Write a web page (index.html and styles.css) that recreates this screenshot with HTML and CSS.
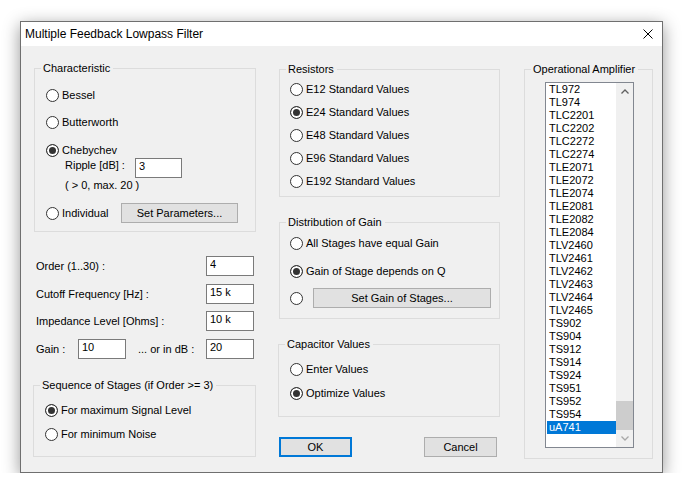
FILE: index.html
```html
<!DOCTYPE html>
<html lang="en">
<head>
<meta charset="utf-8">
<title>Multiple Feedback Lowpass Filter</title>
<link rel="stylesheet" href="styles.css">
</head>
<body>
<div class="desktop">
  <div class="window">
    <div class="titlebar">
      <span class="title">Multiple Feedback Lowpass Filter</span>
      <svg class="close" width="10" height="10" viewBox="0 0 10 10"><path d="M0.5 0.5 L9.5 9.5 M9.5 0.5 L0.5 9.5" stroke="#000" stroke-width="1" fill="none"/></svg>
    </div>
    <div class="client">
      <div class="col col-left">
        <fieldset class="gb gb-char">
          <legend>Characteristic</legend>
          <div class="gb-body">
            <label class="radio-row r-bessel"><input type="radio" name="ch"><span>Bessel</span></label>
            <label class="radio-row r-butter"><input type="radio" name="ch"><span>Butterworth</span></label>
            <label class="radio-row r-cheby"><input type="radio" name="ch" checked><span>Chebychev</span></label>
            <div class="ripple-row"><span class="ripple-label">Ripple [dB] :</span><input class="edit edit-ripple" type="text" value="3"></div>
            <div class="note">( &gt; 0, max. 20 )</div>
            <div class="indiv-row">
              <label class="radio-row indiv"><input type="radio" name="ch"><span>Individual</span></label>
              <button class="btn btn-params">Set Parameters...</button>
            </div>
          </div>
        </fieldset>

        <div class="field-row f-order"><span>Order (1..30) :</span><input class="edit" type="text" value="4"></div>
        <div class="field-row f-cutoff"><span>Cutoff Frequency [Hz] :</span><input class="edit" type="text" value="15 k"></div>
        <div class="field-row f-imp"><span>Impedance Level [Ohms] :</span><input class="edit" type="text" value="10 k"></div>
        <div class="field-row f-gain"><span class="gain-label">Gain :</span><input class="edit" type="text" value="10"><span class="db-label">... or in dB :</span><input class="edit edit-db" type="text" value="20"></div>

        <fieldset class="gb gb-seq">
          <legend>Sequence of Stages (if Order &gt;= 3)</legend>
          <div class="gb-body">
            <label class="radio-row s1"><input type="radio" name="seq" checked><span>For maximum Signal Level</span></label>
            <label class="radio-row s2"><input type="radio" name="seq"><span>For minimum Noise</span></label>
          </div>
        </fieldset>
      </div>

      <div class="col col-mid">
        <fieldset class="gb gb-res">
          <legend>Resistors</legend>
          <div class="gb-body">
            <label class="radio-row"><input type="radio" name="res"><span>E12 Standard Values</span></label>
            <label class="radio-row"><input type="radio" name="res" checked><span>E24 Standard Values</span></label>
            <label class="radio-row"><input type="radio" name="res"><span>E48 Standard Values</span></label>
            <label class="radio-row"><input type="radio" name="res"><span>E96 Standard Values</span></label>
            <label class="radio-row"><input type="radio" name="res"><span>E192 Standard Values</span></label>
          </div>
        </fieldset>

        <fieldset class="gb gb-dist">
          <legend>Distribution of Gain</legend>
          <div class="gb-body">
            <label class="radio-row d1"><input type="radio" name="dist"><span>All Stages have equal Gain</span></label>
            <label class="radio-row d2"><input type="radio" name="dist" checked><span>Gain of Stage depends on Q</span></label>
            <div class="radio-row d3"><input type="radio" name="dist"><button class="btn btn-stages">Set Gain of Stages...</button></div>
          </div>
        </fieldset>

        <fieldset class="gb gb-cap">
          <legend>Capacitor Values</legend>
          <div class="gb-body">
            <label class="radio-row c1"><input type="radio" name="cap"><span>Enter Values</span></label>
            <label class="radio-row c2"><input type="radio" name="cap" checked><span>Optimize Values</span></label>
          </div>
        </fieldset>

        <div class="buttons">
          <button class="btn btn-ok">OK</button>
          <button class="btn btn-cancel">Cancel</button>
        </div>
      </div>

      <div class="col col-right">
        <fieldset class="gb gb-op">
          <legend>Operational Amplifier</legend>
          <div class="gb-body">
            <div class="listbox">
              <ul class="items">
                <li>TL972</li><li>TL974</li><li>TLC2201</li><li>TLC2202</li><li>TLC2272</li><li>TLC2274</li>
                <li>TLE2071</li><li>TLE2072</li><li>TLE2074</li><li>TLE2081</li><li>TLE2082</li><li>TLE2084</li>
                <li>TLV2460</li><li>TLV2461</li><li>TLV2462</li><li>TLV2463</li><li>TLV2464</li><li>TLV2465</li>
                <li>TS902</li><li>TS904</li><li>TS912</li><li>TS914</li><li>TS924</li><li>TS951</li>
                <li>TS952</li><li>TS954</li><li class="sel">uA741</li>
              </ul>
              <div class="scrollbar">
                <div class="sb-btn"><svg width="8" height="5" viewBox="0 0 8 5"><path d="M0.5 4.5 L4 1 L7.5 4.5" stroke="#606060" stroke-width="1.3" fill="none"/></svg></div>
                <div class="sb-track"><div class="sb-thumb"></div></div>
                <div class="sb-btn"><svg width="8" height="5" viewBox="0 0 8 5"><path d="M0.5 0.5 L4 4 L7.5 0.5" stroke="#a8a8a8" stroke-width="1.3" fill="none"/></svg></div>
              </div>
            </div>
          </div>
        </fieldset>
      </div>
    </div>
  </div>
</div>
</body>
</html>
```

FILE: styles.css
```css
* { box-sizing: border-box; }

html, body {
  margin: 0;
  padding: 0;
  background: #ffffff;
}

body {
  font-family: "Liberation Sans", Arial, sans-serif;
  font-size: 11px;
  line-height: 13px;
  color: #000;
}

.desktop {
  padding: 21px 0 0 20px;
}

.window {
  width: 643px;
  height: 452px;
  border: 1px solid #6f6f6f;
  background: #f0f0f0;
  box-shadow: 0 4px 16px rgba(0, 0, 0, 0.42);
  display: flex;
  flex-direction: column;
}

.titlebar {
  height: 24px;
  background: #ffffff;
  display: flex;
  align-items: center;
  padding-left: 4px;
}

.title {
  font-size: 12px;
  line-height: 16px;
  flex: 1;
}

.close {
  margin-right: 9px;
  display: block;
}

.client {
  flex: 1;
  display: flex;
  padding-left: 13px;
}

.col {
  display: flex;
  flex-direction: column;
}

.col-left { width: 222px; }
.col-mid { width: 221px; margin-left: 23px; }
.col-right { width: 129px; margin-left: 24px; }

/* group boxes */
.gb {
  margin: 0;
  padding: 0;
  min-width: 0;
  border: 1px solid #dcdcdc;
}

.gb legend {
  margin-left: 6px;
  padding: 0 3px 0 2px;
  font-size: 11px;
  line-height: 13px;
}

.gb-body {
  display: flex;
  flex-direction: column;
}

/* radios */
.radio-row {
  height: 16px;
  display: flex;
  align-items: center;
  gap: 3px;
  white-space: nowrap;
}

.radio-row input[type="radio"] {
  -webkit-appearance: none;
  appearance: none;
  margin: 0;
  width: 13px;
  height: 13px;
  flex: none;
  border: 1px solid #333333;
  border-radius: 50%;
  background: #ffffff;
}

.radio-row input[type="radio"]:checked {
  background: #333333;
  box-shadow: inset 0 0 0 2px #ffffff;
}

/* edits */
.edit {
  width: 48px;
  height: 20px;
  margin: 0;
  border: 1px solid #7a7a7a;
  background: #ffffff;
  font: inherit;
  color: #000;
  padding: 0 3px 5px 3px;
  line-height: 13px;
}

/* buttons */
.btn {
  font: inherit;
  color: #000;
  height: 20px;
  margin: 0;
  padding: 0;
  background: #e1e1e1;
  border: 1px solid #adadad;
  line-height: 13px;
}

/* characteristic */
.gb-char { margin-top: 16px; }
.gb-char .gb-body { padding: 0 0 8px 11px; }
.r-bessel { margin-top: 12px; }
.r-butter { margin-top: 11px; }
.r-cheby { margin-top: 12px; }

.ripple-row {
  display: flex;
  align-items: flex-start;
  height: 20px;
  padding-left: 19px;
}
.ripple-label {
  width: 70px;
  padding-top: 1px;
}
.edit-ripple { width: 47px; }

.note {
  margin-top: 1px;
  padding-left: 19px;
}

.indiv-row {
  margin-top: 11px;
  height: 20px;
  display: flex;
  align-items: center;
}
.indiv-row .radio-row { width: 75px; }
.btn-params { width: 117px; }

/* parameter fields */
.field-row {
  height: 20px;
  display: flex;
  align-items: center;
  justify-content: space-between;
  padding: 0 2px 0 2px;
}
.f-order { margin-top: 24px; }
.f-cutoff { margin-top: 8px; }
.f-imp { margin-top: 7px; }
.f-gain { margin-top: 8px; justify-content: flex-start; }
.gain-label { width: 42px; }
.db-label { margin-left: 12px; }
.edit-db { margin-left: auto; }

/* sequence */
.gb-seq { margin-top: 20px; margin-left: -1px; }
.gb-seq .gb-body { padding: 0 0 14px 11px; }
.s1 { margin-top: 10px; }
.s2 { margin-top: 8px; }

/* resistors */
.gb-res { margin-top: 17px; }
.gb-res .gb-body { padding: 5px 0 7px 10px; gap: 7px; }

/* distribution */
.gb-dist { margin-top: 19px; }
.gb-dist .gb-body { padding: 0 0 10px 10px; }
.d1 { margin-top: 6px; }
.d2 { margin-top: 12px; }
.d3 { margin-top: 9px; height: 20px; gap: 10px; }
.btn-stages { width: 178px; }

/* capacitors */
.gb-cap { margin-top: 19px; margin-left: -1px; }
.gb-cap .gb-body { padding: 0 0 15px 11px; }
.c1 { margin-top: 10px; }
.c2 { margin-top: 8px; }

.buttons {
  margin-top: 20px;
  display: flex;
  justify-content: space-between;
  padding-right: 3px;
}
.btn-ok {
  width: 73px;
  border: 2px solid #0078d7;
}
.btn-cancel { width: 73px; }

/* op amp list */
.gb-op { margin-top: 17px; }
.gb-op .gb-body { padding: 6px 0 10px 20px; }

.listbox {
  width: 89px;
  height: 366px;
  border: 1px solid #828790;
  background: #ffffff;
  display: flex;
}

.items {
  list-style: none;
  margin: 0;
  padding: 0;
  width: 70px;
}

.items li {
  height: 13px;
  padding-left: 3px;
  white-space: nowrap;
}

.items li.sel {
  background: #0078d7;
  color: #ffffff;
  margin-left: 1px;
  padding-left: 2px;
}

.scrollbar {
  width: 17px;
  background: #f0f0f0;
  display: flex;
  flex-direction: column;
}

.sb-btn {
  height: 17px;
  display: flex;
  align-items: center;
  justify-content: center;
}

.sb-track {
  flex: 1;
  display: flex;
  flex-direction: column;
  justify-content: flex-end;
}

.sb-thumb {
  height: 29px;
  background: #cdcdcd;
}
```
